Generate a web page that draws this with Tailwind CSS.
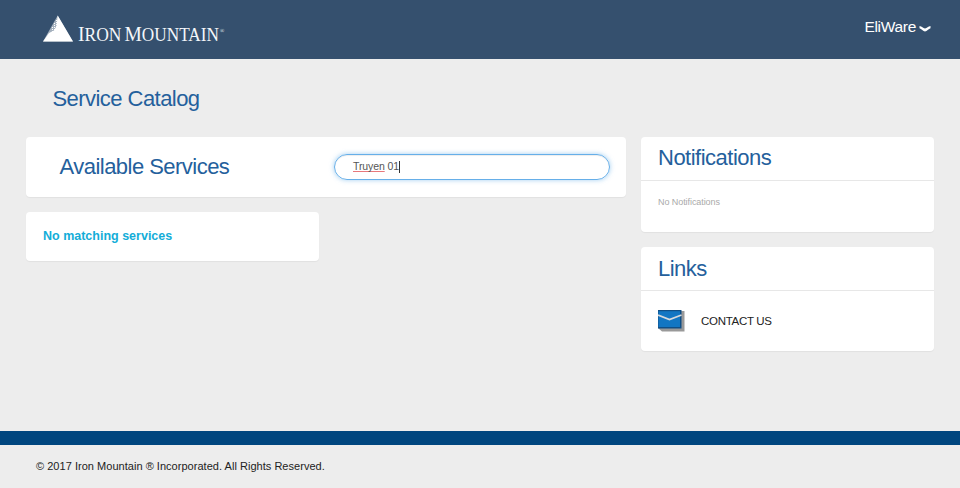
<!DOCTYPE html>
<html lang="en">
<head>
<meta charset="utf-8">
<title>Service Catalog</title>
<script src="https://cdn.jsdelivr.net/npm/@tailwindcss/browser@4"></script>
</head>
<body class="h-[488px] overflow-hidden bg-[#ededed] font-['Liberation_Sans',Arial,sans-serif] text-[#222] flex flex-col">
<header class="h-[59px] shrink-0 bg-[#35506e] flex items-start justify-between pl-[42px] pr-[29px]">
  <svg class="mt-[14px]" width="186" height="38" viewBox="0 0 186 38" role="img" aria-label="Iron Mountain">
    <path d="M15.700 1.500 31 27.500H1Z" fill="#fff" fill-opacity=".55"/>
    <path d="M15.700 1.500 31 27.500H1L7 19 12 16.500 14.500 12Z" fill="#fff"/>
    <path d="M14.500 6v7M12.500 9v7M10.500 13v5" stroke="#fff" stroke-width="1" stroke-dasharray="1 1"/>
    <g fill="#f4f7fa" font-family="Liberation Serif, Times New Roman, serif">
      <text x="36" y="27.300" font-size="21.500" textLength="43.500" lengthAdjust="spacingAndGlyphs">I<tspan font-size="19">RON</tspan></text>
      <text x="82.500" y="27.300" font-size="21.500" textLength="94.500" lengthAdjust="spacingAndGlyphs">M<tspan font-size="19">OUNTAIN</tspan></text>
      <text x="178" y="18.500" font-size="5.500">®</text>
    </g>
  </svg>
  <div class="mt-[16px] flex items-center text-[15.500px] leading-[22px] tracking-[-0.3px] text-white"><span>EliWare</span>
    <svg class="ml-[3px] mt-[3px]" width="12" height="8" viewBox="0 0 12 8"><path d="M.5 1C3 1 4 3.500 6 3.500S9 1 11.500 1V3.200C9.500 3.700 8 6.500 6 6.500S2.500 3.700 .5 3.200Z" fill="#fff"/></svg>
  </div>
</header>
<main class="grow px-[26px]">
  <h1 class="pl-[26.500px] pt-[26px] h-[78px] text-[22px] leading-[28px] tracking-[-0.550px] text-[#24609c]">Service Catalog</h1>
  <div class="flex items-start gap-[15px]">
    <div class="w-[600px] flex flex-col gap-[15px]">
      <section class="h-[60px] rounded bg-white shadow-[0_1px_1px_rgba(0,0,0,0.05)] flex items-center justify-between pl-[33.500px] pr-[16px]">
        <h2 class="text-[22px] leading-[28px] tracking-[-0.530px] text-[#24609c]">Available Services</h2>
        <div class="w-[276px] h-[26px] rounded-full border border-[#66afe9] shadow-[0_0_5px_rgba(102,175,233,0.6),inset_0_1px_1px_rgba(0,0,0,0.075)] flex items-center pl-[18px] text-[10.500px] tracking-[-0.1px] text-[#555]"><span class="underline decoration-[#e8787c] decoration-[1px] underline-offset-[1px] [text-decoration-skip-ink:none]">Truyen</span><span class="whitespace-pre"> 01</span><i class="block w-px h-[12px] bg-[#333]"></i></div>
      </section>
      <section class="w-[293px] h-[49px] rounded bg-white shadow-[0_1px_1px_rgba(0,0,0,0.05)] flex items-center pl-[17px] text-[12.500px] font-bold text-[#13add8]">No matching services</section>
    </div>
    <aside class="w-[293px] flex flex-col gap-[15px]">
      <section class="h-[95px] rounded bg-white shadow-[0_1px_1px_rgba(0,0,0,0.05)]">
        <h2 class="h-[44px] border-b border-[#e7e7e7] pl-[17px] pt-[7px] text-[22px] leading-[28px] tracking-[-0.500px] text-[#24609c]">Notifications</h2>
        <p class="pl-[17px] pt-[15px] text-[9px] leading-[12px] tracking-[-0.070px] text-[#aaa]">No Notifications</p>
      </section>
      <section class="h-[104px] rounded bg-white shadow-[0_1px_1px_rgba(0,0,0,0.05)]">
        <h2 class="h-[44px] border-b border-[#e7e7e7] pl-[17px] pt-[8px] text-[22px] leading-[28px] tracking-[-0.500px] text-[#24609c]">Links</h2>
        <a class="flex items-center h-[59px] pl-[17px] text-[11.500px] text-[#222]">
          <svg width="27" height="22" viewBox="0 0 27 22"><path d="M3 1H26.500V21.500H4L0 18Z" fill="#999"/><path d="M0 0H23.500V18.500H0Z" fill="#104f86"/><path d="M.5 1.200H22V17H.5Z" fill="#1276c3"/><path d="M0 5 11.500 9.500 23.500 5" fill="none" stroke="#d5d9dd" stroke-width="1.700"/></svg>
          <span class="ml-[16px] pt-[2px] tracking-[-0.300px]">CONTACT US</span>
        </a>
      </section>
    </aside>
  </div>
</main>
<footer class="h-[57px] shrink-0 border-t-[14px] border-[#00467f] pl-[36px] pt-[14px] text-[11px] leading-[14px] tracking-[0.030px]">© 2017 Iron Mountain ® Incorporated. All Rights Reserved.</footer>
</body>
</html>
